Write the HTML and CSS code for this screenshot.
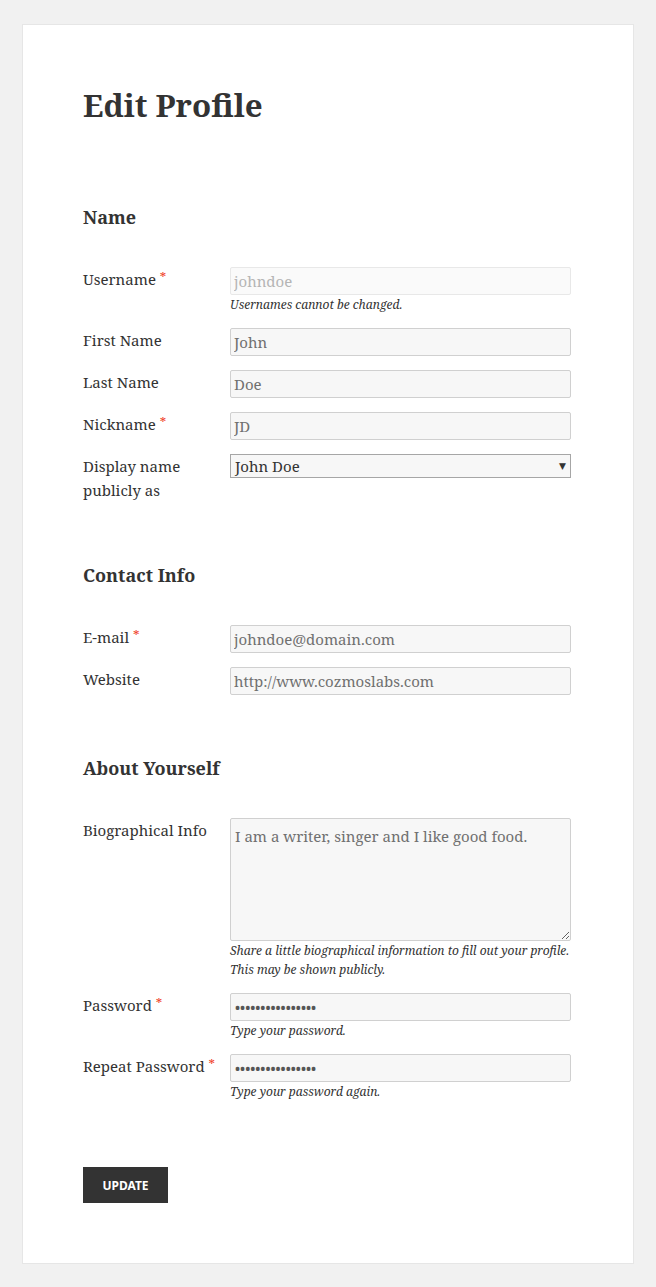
FILE: index.html
```html
<!DOCTYPE html>
<html lang="en">
<head>
  <meta charset="UTF-8">
  <meta name="viewport" content="width=device-width, initial-scale=1.0">
  <title>Edit Profile</title>
  <link rel="stylesheet" href="styles.css">
</head>
<body>
  <div class="container">
    <h1>Edit Profile</h1>

    <h4>Name</h4>
    <div class="row">
      <label for="username">Username <span class="req">*</span></label>
      <div class="field">
        <input type="text" id="username" value="johndoe" disabled>
        <span class="hint">Usernames cannot be changed.</span>
      </div>
    </div>
    <div class="row">
      <label for="first">First Name</label>
      <div class="field"><input type="text" id="first" value="John"></div>
    </div>
    <div class="row">
      <label for="last">Last Name</label>
      <div class="field"><input type="text" id="last" value="Doe"></div>
    </div>
    <div class="row">
      <label for="nick">Nickname <span class="req">*</span></label>
      <div class="field"><input type="text" id="nick" value="JD"></div>
    </div>
    <div class="row">
      <label for="display">Display name publicly as</label>
      <div class="field">
        <div class="select">
          <span>John Doe</span>
          <span class="arrow">&#9660;</span>
        </div>
      </div>
    </div>

    <h4>Contact Info</h4>
    <div class="row">
      <label for="email">E-mail <span class="req">*</span></label>
      <div class="field"><input type="text" id="email" value="johndoe@domain.com"></div>
    </div>
    <div class="row">
      <label for="website">Website</label>
      <div class="field"><input type="text" id="website" value="http://www.cozmoslabs.com"></div>
    </div>

    <h4>About Yourself</h4>
    <div class="row">
      <label for="bio">Biographical Info</label>
      <div class="field">
        <textarea id="bio">I am a writer, singer and I like good food.</textarea>
        <span class="hint">Share a little biographical information to fill out your profile. This may be shown publicly.</span>
      </div>
    </div>
    <div class="row">
      <label for="pass">Password <span class="req">*</span></label>
      <div class="field">
        <input type="password" id="pass" value="passwordpassword">
        <span class="hint">Type your password.</span>
      </div>
    </div>
    <div class="row">
      <label for="pass2">Repeat Password <span class="req">*</span></label>
      <div class="field">
        <input type="password" id="pass2" value="passwordpassword">
        <span class="hint">Type your password again.</span>
      </div>
    </div>

    <button>Update</button>
  </div>
</body>
</html>
```

FILE: styles.css
```css
body {
  font-family: "Noto Serif", "DejaVu Serif", serif;
  margin: 0;
  padding: 24px 22px 24px 22px;
  background-color: #f1f1f1;
  color: #333;
}
.container {
  background: #fff;
  border: 1px solid #e6e6e6;
  padding: 60px 60px 60px 60px;
}
h1 {
  font-size: 31.3px;
  line-height: 40px;
  margin: 0 0 80px;
  font-weight: 700;
}
h4 {
  font-size: 18px;
  line-height: 24px;
  margin: 0 0 38px;
  font-weight: 700;
}
.row {
  display: flex;
  margin-bottom: 14px;
}
label {
  width: 147px;
  flex: none;
  font-size: 15px;
  line-height: 24px;
}
.req {
  color: #f0412a;
  font-size: 13px;
  vertical-align: top;
  line-height: 20px;
}
.field {
  width: 341px;
}
input, textarea {
  display: block;
  box-sizing: border-box;
  width: 100%;
  height: 28px;
  margin: 0;
  padding: 3px 3px;
  border: 1px solid #d0d0d0;
  border-radius: 2px;
  background: #f7f7f7;
  color: #707070;
  font-family: inherit;
  font-size: 15px;
}
input:disabled {
  background: #fafafa;
  border-color: #e8e8e8;
  color: #b5b5b5;
}
input[type="password"] {
  font-size: 14px;
  padding-left: 4px;
  color: #555;
}
textarea {
  height: 123px;
  padding: 6px 4px;
  line-height: 22px;
  resize: vertical;
}
.select {
  box-sizing: border-box;
  height: 24px;
  border: 1px solid #a6a6a6;
  background: #f7f7f7;
  display: flex;
  justify-content: space-between;
  align-items: center;
  padding: 0 4px;
  font-size: 15px;
  color: #333;
}
.arrow {
  font-size: 9px;
  font-family: "DejaVu Sans", sans-serif;
  color: #333;
}
.hint {
  display: block;
  font-size: 12px;
  line-height: 19px;
  font-style: italic;
  color: #333;
}
.row + h4 {
  margin-top: 61px;
}
button {
  display: block;
  margin-top: 66px;
  width: 85px;
  height: 36px;
  border: none;
  background: #333;
  color: #fff;
  font-family: "Noto Sans", "Open Sans", sans-serif;
  font-weight: 700;
  font-size: 12px;
  text-transform: uppercase;
  cursor: pointer;
}
```
